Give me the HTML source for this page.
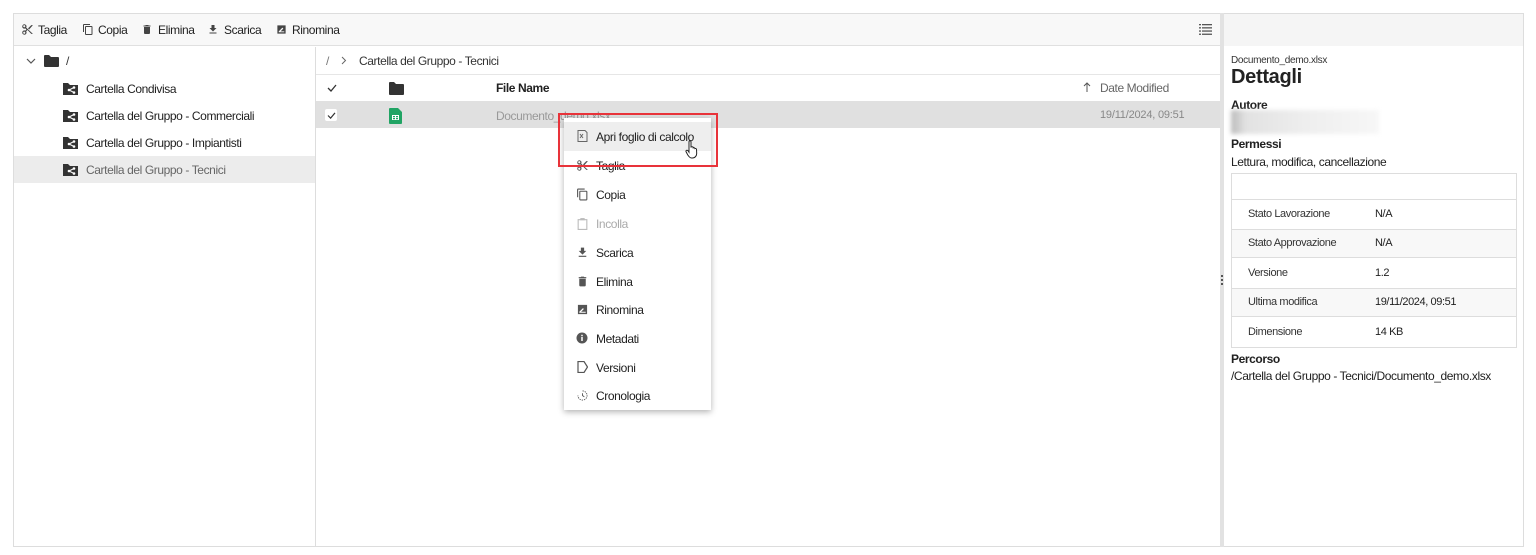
<!DOCTYPE html>
<html><head><meta charset="utf-8"><style>
*{box-sizing:border-box;margin:0;padding:0}
body{width:1536px;height:555px;background:#fff;font-family:"Liberation Sans",Arial,sans-serif;position:relative;overflow:hidden;color:#212121}
.a{position:absolute}
.t{font-size:12px;white-space:nowrap;letter-spacing:-0.4px}
svg{display:block}
</style></head><body>
<div class="a" style="left:13px;top:13px;width:1208px;height:534px;border:1px solid #ddd;border-right:none"></div>
<div class="a" style="left:14px;top:14px;width:1206px;height:32px;background:#f8f8f8;border-bottom:1px solid #e0e0e0"></div>
<svg class="a" style="left:21px;top:23px" width="13" height="13" viewBox="0 0 24 24"><path fill="#444" d="M9.6 8.6A4 4 0 1 0 8 10l2 2-2 2a4 4 0 1 0 1.6 1.4L12 13l7 7h3L9.6 8.6zM6 8a2 2 0 1 1 0-4 2 2 0 0 1 0 4zm0 12a2 2 0 1 1 0-4 2 2 0 0 1 0 4zM19 4l-6 6 2 2 7-8z"/></svg>
<div class="a t" style="left:38px;top:23px">Taglia</div>
<svg class="a" style="left:82px;top:23px" width="12" height="13" viewBox="0 0 24 24"><path fill="#444" d="M16 1H4a2 2 0 0 0-2 2v14h2V3h12V1zm3 4H8a2 2 0 0 0-2 2v14a2 2 0 0 0 2 2h11a2 2 0 0 0 2-2V7a2 2 0 0 0-2-2zm0 16H8V7h11v14z"/></svg>
<div class="a t" style="left:98px;top:23px">Copia</div>
<svg class="a" style="left:141px;top:23px" width="12" height="13" viewBox="0 0 24 24"><path fill="#444" d="M6 19a2 2 0 0 0 2 2h8a2 2 0 0 0 2-2V7H6v12zM19 4h-3.5l-1-1h-5l-1 1H5v2h14V4z"/></svg>
<div class="a t" style="left:158px;top:23px">Elimina</div>
<svg class="a" style="left:207px;top:23px" width="12" height="13" viewBox="0 0 24 24"><path fill="#444" d="M19 9h-4V3H9v6H5l7 7 7-7zM5 18v2h14v-2H5z"/></svg>
<div class="a t" style="left:224px;top:23px">Scarica</div>
<svg class="a" style="left:276px;top:24px" width="11" height="11" viewBox="0 0 24 24"><path fill="#444" d="M3 3h18v18H3zM6 18h12v-2H10l6-6-2-2-8 8z"/></svg>
<div class="a t" style="left:292px;top:23px">Rinomina</div>
<svg class="a" style="left:1199px;top:24px" width="13" height="11" viewBox="0 0 13 11"><g fill="#555"><rect x="0" y="0" width="2" height="1.3"/><rect x="3" y="0" width="10" height="1.3"/><rect x="0" y="3.2" width="2" height="1.3"/><rect x="3" y="3.2" width="10" height="1.3"/><rect x="0" y="6.4" width="2" height="1.3"/><rect x="3" y="6.4" width="10" height="1.3"/><rect x="0" y="9.6" width="2" height="1.3"/><rect x="3" y="9.6" width="10" height="1.3"/></g></svg>
<div class="a" style="left:315px;top:47px;width:1px;height:500px;background:#ddd"></div>
<svg class="a" style="left:26px;top:57px" width="10" height="8" viewBox="0 0 10 8"><path d="M1 2l4 4 4-4" fill="none" stroke="#555" stroke-width="1.2"/></svg>
<svg class="a" style="left:44px;top:55px" width="15" height="12" viewBox="0 0 15 12"><path fill="#333" d="M0 1a1 1 0 0 1 1-1h4l2 2h7a1 1 0 0 1 1 1v8a1 1 0 0 1-1 1H1a1 1 0 0 1-1-1z"/></svg>
<div class="a t" style="left:66px;top:54px;color:#333">/</div>
<div class="a" style="left:14px;top:156px;width:301px;height:27px;background:#ececec"></div>
<div class="a t" style="left:86px;top:82px">Cartella Condivisa</div>
<div class="a t" style="left:86px;top:109px">Cartella del Gruppo - Commerciali</div>
<div class="a t" style="left:86px;top:136px">Cartella del Gruppo - Impiantisti</div>
<div class="a t" style="left:86px;top:163px;color:#666">Cartella del Gruppo - Tecnici</div>
<svg class="a" style="left:63px;top:82px" width="15" height="13" viewBox="0 0 15 13"><path fill="#333" d="M0 1h5l2 2h8v10H0z"/><circle cx="11" cy="5.5" r="1.3" fill="#fff"/><circle cx="11" cy="10.5" r="1.3" fill="#fff"/><circle cx="6" cy="8" r="1.3" fill="#fff"/><path d="M11 5.5L6 8l5 2.5" stroke="#fff" stroke-width="1" fill="none"/></svg>
<svg class="a" style="left:63px;top:109px" width="15" height="13" viewBox="0 0 15 13"><path fill="#333" d="M0 1h5l2 2h8v10H0z"/><circle cx="11" cy="5.5" r="1.3" fill="#fff"/><circle cx="11" cy="10.5" r="1.3" fill="#fff"/><circle cx="6" cy="8" r="1.3" fill="#fff"/><path d="M11 5.5L6 8l5 2.5" stroke="#fff" stroke-width="1" fill="none"/></svg>
<svg class="a" style="left:63px;top:136px" width="15" height="13" viewBox="0 0 15 13"><path fill="#333" d="M0 1h5l2 2h8v10H0z"/><circle cx="11" cy="5.5" r="1.3" fill="#fff"/><circle cx="11" cy="10.5" r="1.3" fill="#fff"/><circle cx="6" cy="8" r="1.3" fill="#fff"/><path d="M11 5.5L6 8l5 2.5" stroke="#fff" stroke-width="1" fill="none"/></svg>
<svg class="a" style="left:63px;top:163px" width="15" height="13" viewBox="0 0 15 13"><path fill="#333" d="M0 1h5l2 2h8v10H0z"/><circle cx="11" cy="5.5" r="1.3" fill="#fff"/><circle cx="11" cy="10.5" r="1.3" fill="#fff"/><circle cx="6" cy="8" r="1.3" fill="#fff"/><path d="M11 5.5L6 8l5 2.5" stroke="#fff" stroke-width="1" fill="none"/></svg>
<div class="a t" style="left:326px;top:54px;color:#777">/</div>
<svg class="a" style="left:341px;top:56px" width="6" height="9" viewBox="0 0 6 9"><path d="M1 1l3.5 3.5L1 8" fill="none" stroke="#666" stroke-width="1"/></svg>
<div class="a t" style="left:359px;top:54px;color:#333">Cartella del Gruppo - Tecnici</div>
<div class="a" style="left:316px;top:74px;width:904px;height:1px;background:#e6e6e6"></div>
<svg class="a" style="left:327px;top:84px" width="10" height="8" viewBox="0 0 10 8"><path d="M1 4l3 3 5-6" fill="none" stroke="#333" stroke-width="1.3"/></svg>
<svg class="a" style="left:389px;top:82px" width="15" height="13" viewBox="0 0 15 13"><path fill="#333" d="M0 1a1 1 0 0 1 1-1h4l2 2h7a1 1 0 0 1 1 1v9a1 1 0 0 1-1 1H1a1 1 0 0 1-1-1z"/></svg>
<div class="a t" style="left:496px;top:81px;font-weight:bold">File Name</div>
<svg class="a" style="left:1083px;top:82px" width="8" height="11" viewBox="0 0 8 11"><path d="M4 10V1M1 4l3-3 3 3" fill="none" stroke="#555" stroke-width="1"/></svg>
<div class="a t" style="left:1100px;top:81px;color:#666">Date Modified</div>
<div class="a" style="left:316px;top:101px;width:904px;height:27px;background:#e0e0e0"></div>
<div class="a" style="left:325px;top:109px;width:12px;height:12px;background:#fff;border-radius:2px"></div>
<svg class="a" style="left:327px;top:112px" width="9" height="7" viewBox="0 0 10 8"><path d="M1 4l3 3 5-6" fill="none" stroke="#333" stroke-width="1.4"/></svg>
<svg class="a" style="left:389px;top:108px" width="13" height="16" viewBox="0 0 13 16"><path fill="#21a464" d="M0 1a1 1 0 0 1 1-1h8l4 4v11a1 1 0 0 1-1 1H1a1 1 0 0 1-1-1z"/><path fill="#fff" d="M3 7h7v5H3zM4 8v1.2h2V8zm3 0v1.2h2V8zM4 10v1.2h2V10zm3 0v1.2h2V10z"/></svg>
<div class="a t" style="left:496px;top:109px;color:#999">Documento_demo.xlsx</div>
<div class="a t" style="left:1100px;top:109px;color:#888;font-size:11px;letter-spacing:-0.2px">19/11/2024, 09:51</div>
<div class="a" style="left:1220px;top:13px;width:4px;height:534px;background:#e2e2e2"></div>
<div class="a" style="left:1221px;top:275px;width:2px;height:2px;background:#555"></div>
<div class="a" style="left:1221px;top:279px;width:2px;height:2px;background:#555"></div>
<div class="a" style="left:1221px;top:283px;width:2px;height:2px;background:#555"></div>
<div class="a" style="left:1224px;top:13px;width:300px;height:534px;border:1px solid #ddd;border-left:none"></div>
<div class="a" style="left:1224px;top:14px;width:299px;height:32px;background:#f5f5f5"></div>
<div class="a" style="left:1231px;top:55px;font-size:10px;color:#333;letter-spacing:-0.3px">Documento_demo.xlsx</div>
<div class="a" style="left:1231px;top:66px;font-size:20px;font-weight:bold;color:#222;letter-spacing:-0.3px">Dettagli</div>
<div class="a t" style="left:1231px;top:98px;font-weight:bold">Autore</div>
<div class="a" style="left:1231px;top:110px;width:148px;height:24px;background:linear-gradient(90deg,#bbb 0%,#e2e2e2 10%,#eee 50%,#f7f7f7 100%);filter:blur(2px)"></div>
<div class="a t" style="left:1231px;top:137px;font-weight:bold">Permessi</div>
<div class="a t" style="left:1231px;top:155px">Lettura, modifica, cancellazione</div>
<div class="a" style="left:1231px;top:173px;width:286px;height:175px;border:1px solid #ddd"></div>
<div class="a" style="left:1232px;top:199px;width:284px;height:1px;background:#ddd"></div>
<div class="a" style="left:1232px;top:229px;width:284px;height:29px;background:#f8f8f8;border-top:1px solid #ddd;border-bottom:1px solid #ddd"></div>
<div class="a" style="left:1232px;top:288px;width:284px;height:29px;background:#f8f8f8;border-top:1px solid #ddd;border-bottom:1px solid #ddd"></div>
<div class="a t" style="left:1248px;top:208px;font-size:11px;color:#333">Stato Lavorazione</div><div class="a t" style="left:1375px;top:208px;font-size:11px">N/A</div>
<div class="a t" style="left:1248px;top:237px;font-size:11px;color:#333">Stato Approvazione</div><div class="a t" style="left:1375px;top:237px;font-size:11px">N/A</div>
<div class="a t" style="left:1248px;top:267px;font-size:11px;color:#333">Versione</div><div class="a t" style="left:1375px;top:267px;font-size:11px">1.2</div>
<div class="a t" style="left:1248px;top:296px;font-size:11px;color:#333">Ultima modifica</div><div class="a t" style="left:1375px;top:296px;font-size:11px">19/11/2024, 09:51</div>
<div class="a t" style="left:1248px;top:326px;font-size:11px;color:#333">Dimensione</div><div class="a t" style="left:1375px;top:326px;font-size:11px">14 KB</div>
<div class="a t" style="left:1231px;top:352px;font-weight:bold">Percorso</div>
<div class="a t" style="left:1231px;top:369px">/Cartella del Gruppo - Tecnici/Documento_demo.xlsx</div>
<div class="a" style="left:564px;top:118px;width:147px;height:292px;background:#fff;box-shadow:0 2px 6px rgba(0,0,0,.3)"></div>
<div class="a" style="left:564px;top:122px;width:147px;height:29px;background:#eee"></div>
<div class="a t" style="left:596px;top:130px">Apri foglio di calcolo</div>
<div class="a t" style="left:596px;top:159px">Taglia</div>
<div class="a t" style="left:596px;top:188px">Copia</div>
<div class="a t" style="left:596px;top:217px;color:#aaa">Incolla</div>
<div class="a t" style="left:596px;top:246px">Scarica</div>
<div class="a t" style="left:596px;top:275px">Elimina</div>
<div class="a t" style="left:596px;top:303px">Rinomina</div>
<div class="a t" style="left:596px;top:332px">Metadati</div>
<div class="a t" style="left:596px;top:361px">Versioni</div>
<div class="a t" style="left:596px;top:389px">Cronologia</div>
<svg class="a" style="left:577px;top:130px" width="11" height="12" viewBox="0 0 11 12"><path d="M1 .5h7l2 2V11.5H1z" fill="none" stroke="#666"/><path d="M3 4l3 4M6 4L3 8" stroke="#666"/></svg>
<svg class="a" style="left:576px;top:159px" width="13" height="13" viewBox="0 0 24 24"><path fill="#555" d="M9.6 8.6A4 4 0 1 0 8 10l2 2-2 2a4 4 0 1 0 1.6 1.4L12 13l7 7h3L9.6 8.6zM6 8a2 2 0 1 1 0-4 2 2 0 0 1 0 4zm0 12a2 2 0 1 1 0-4 2 2 0 0 1 0 4zM19 4l-6 6 2 2 7-8z"/></svg>
<svg class="a" style="left:576px;top:188px" width="13" height="13" viewBox="0 0 24 24"><path fill="#555" d="M16 1H4a2 2 0 0 0-2 2v14h2V3h12V1zm3 4H8a2 2 0 0 0-2 2v14a2 2 0 0 0 2 2h11a2 2 0 0 0 2-2V7a2 2 0 0 0-2-2zm0 16H8V7h11v14z"/></svg>
<svg class="a" style="left:577px;top:217px" width="11" height="13" viewBox="0 0 10 12"><path d="M1 2.5h8v9H1z" fill="none" stroke="#bbb"/><rect x="3" y="1" width="4" height="2" fill="#bbb"/></svg>
<svg class="a" style="left:576px;top:246px" width="13" height="13" viewBox="0 0 24 24"><path fill="#555" d="M19 9h-4V3H9v6H5l7 7 7-7zM5 18v2h14v-2H5z"/></svg>
<svg class="a" style="left:576px;top:275px" width="13" height="13" viewBox="0 0 24 24"><path fill="#555" d="M6 19a2 2 0 0 0 2 2h8a2 2 0 0 0 2-2V7H6v12zM19 4h-3.5l-1-1h-5l-1 1H5v2h14V4z"/></svg>
<svg class="a" style="left:577px;top:304px" width="11" height="11" viewBox="0 0 24 24"><path fill="#555" d="M2 2h20v20H2zM5 19h14v-2H9l6-6-2-2-8 8z"/></svg>
<svg class="a" style="left:576px;top:332px" width="12" height="12" viewBox="0 0 24 24"><circle cx="12" cy="12" r="11" fill="#555"/><rect x="10.5" y="10" width="3" height="8" fill="#fff"/><rect x="10.5" y="5.5" width="3" height="3" fill="#fff"/></svg>
<svg class="a" style="left:577px;top:361px" width="11" height="12" viewBox="0 0 11 12"><path d="M1 .5h6l3.5 5.5L7 11.5H1z" fill="none" stroke="#555" stroke-width="1.2"/></svg>
<svg class="a" style="left:577px;top:390px" width="11" height="11" viewBox="0 0 12 12"><path d="M6 1a5 5 0 1 1-5 5" fill="none" stroke="#555" stroke-dasharray="1.5 1"/><path d="M6 3.5V6l2 1.5" fill="none" stroke="#555"/></svg>
<div class="a" style="left:558px;top:113px;width:160px;height:54px;border:2px solid #e8333a"></div>
<svg class="a" style="left:685px;top:139px" width="16" height="20" viewBox="0 0 16 20"><path d="M4.5 1.5c.8 0 1.5.6 1.5 1.4V8l1-.2c.8 0 1.3.5 1.3 1l.1-.1c.7-.2 1.4.2 1.5.9.6-.3 1.5 0 1.6.8l.2 4c0 2.5-1.7 4.6-4.2 4.6H6.5C5 19 3.8 17.5 2.8 16L1 12.6c-.3-.7.2-1.4 1-1.4.5 0 .9.3 1.2.8l.8 1.2V2.9c0-.8.7-1.4 1.5-1.4z" fill="#fff" stroke="#222" stroke-width="1"/></svg>
</body></html>
